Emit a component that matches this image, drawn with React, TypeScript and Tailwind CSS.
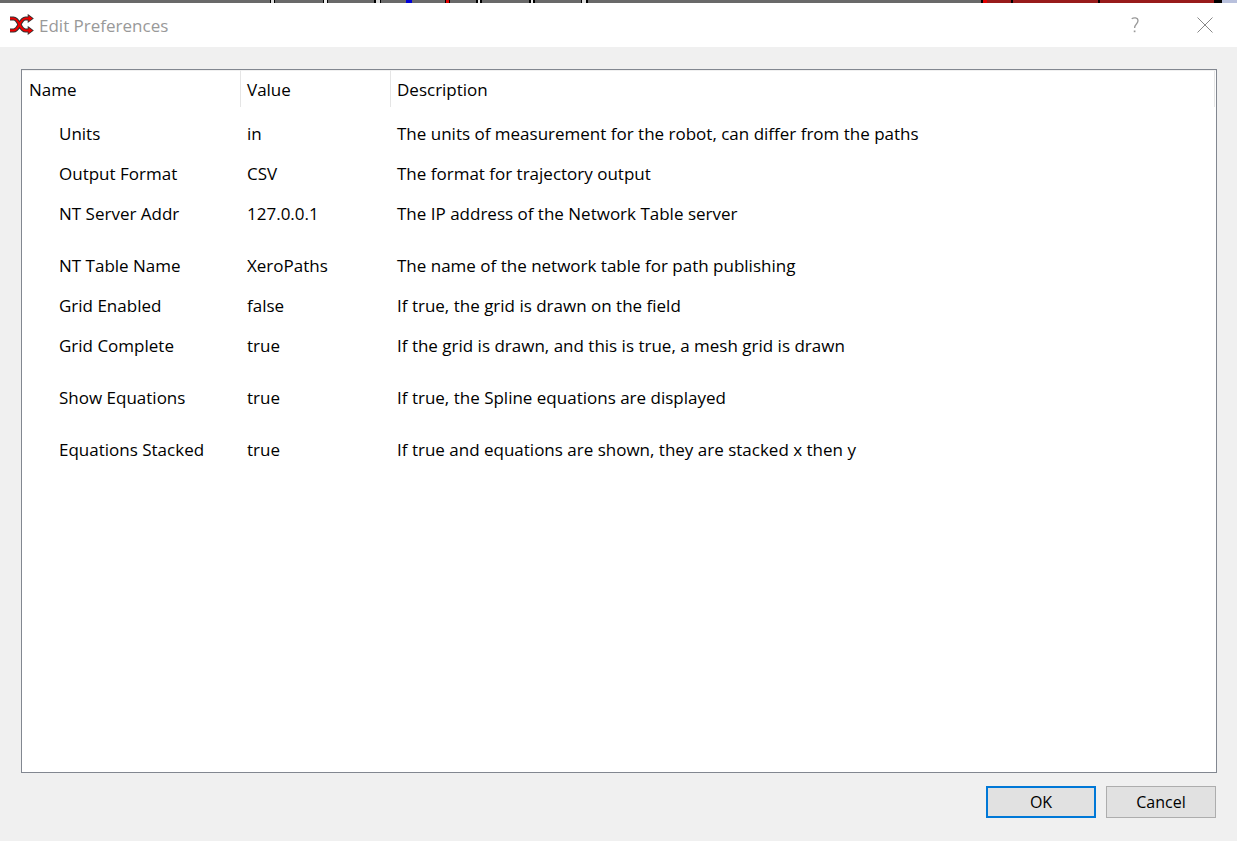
const preferences = [
  { name: 'Units', value: 'in', description: 'The units of measurement for the robot, can differ from the paths', pad: 'pt-[7px] h-[47px]' },
  { name: 'Output Format', value: 'CSV', description: 'The format for trajectory output', pad: 'h-10' },
  { name: 'NT Server Addr', value: '127.0.0.1', description: 'The IP address of the Network Table server', pad: 'h-10' },
  { name: 'NT Table Name', value: 'XeroPaths', description: 'The name of the network table for path publishing', pad: 'pt-3 h-[52px]' },
  { name: 'Grid Enabled', value: 'false', description: 'If true, the grid is drawn on the field', pad: 'h-10' },
  { name: 'Grid Complete', value: 'true', description: 'If the grid is drawn, and this is true, a mesh grid is drawn', pad: 'h-10' },
  { name: 'Show Equations', value: 'true', description: 'If true, the Spline equations are displayed', pad: 'pt-3 h-[52px]' },
  { name: 'Equations Stacked', value: 'true', description: 'If true and equations are shown, they are stacked x then y', pad: 'pt-3 h-[52px]' },
];

const fieldMarks: [number, number, string][] = [
  [270, 5, '#000'], [271, 3, '#ddd'],
  [323, 5, '#000'], [324, 3, '#eee'],
  [374, 7, '#000'], [376, 4, '#ddd'],
  [406, 6, '#0000d8'],
  [445, 5, '#000'], [446, 3, '#e00000'],
  [476, 6, '#000'], [478, 2, '#eee'],
  [529, 6, '#000'], [531, 2, '#eee'],
  [581, 7, '#000'], [582, 4, '#ddd'],
  [981, 233, '#981b1b'], [981, 2, '#000'], [983, 4, '#e00000'],
  [1011, 2, '#000'], [1098, 2, '#000'],
  [1214, 8, '#000'], [1222, 400, '#b8c0dc'],
];

function FieldEdge() {
  return (
    <svg className="block h-[3px] w-full shrink-0 bg-[#696969]" aria-hidden="true" shapeRendering="crispEdges">
      {fieldMarks.map(([x, width, fill], i) => (
        <rect key={i} x={x} y="0" width={width} height="3" fill={fill} />
      ))}
    </svg>
  );
}

function ShuffleIcon() {
  const lines = 'M1 5.5h3.5c6 0 6 12 12 12H20M1 17.5h3.5c6 0 6-12 12-12H20';
  const heads = 'M19.5 2.5L23.5 5.5l-4 3zM19.5 14.5L23.5 17.5l-4 3z';
  return (
    <svg className="h-6 w-[26px] shrink-0" viewBox="0 0 26 24" fill="none" aria-hidden="true">
      <path d={lines} stroke="#333333" strokeWidth="4" />
      <path d={heads} fill="#333333" stroke="#333333" strokeWidth="1.6" />
      <path d={lines} stroke="#f00000" strokeWidth="2" />
      <path d={heads} fill="#f00000" />
    </svg>
  );
}

export default function App() {
  return (
    <div className="flex min-h-screen flex-col bg-[#f0f0f0] font-['Open_Sans','Noto_Sans',sans-serif] text-[17px] leading-6 text-black">
      <FieldEdge />
      <header className="flex h-11 shrink-0 items-center bg-white pr-6 pl-[9px] text-[#999999]">
        <ShuffleIcon />
        <h1 className="ml-1 flex-1 pt-0.5 font-normal">Edit Preferences</h1>
        <button type="button" aria-label="Help" className="mr-[46px] flex size-8 items-center justify-center">
          <svg className="h-4 w-2" viewBox="0 0 8 16" fill="none" stroke="#999999" strokeWidth="1.3" aria-hidden="true">
            <path d="M.7 1.8C2.5.5 7 .1 7 3.8 7 7 3.6 7 3.6 11" />
            <path d="M3.6 13.5v1.7" strokeWidth="1.7" />
          </svg>
        </button>
        <button type="button" aria-label="Close" className="flex h-8 w-4 items-center justify-center">
          <svg className="size-4 shrink-0" viewBox="0 0 16 16" fill="none" stroke="#888888" aria-hidden="true">
            <path d="M.5.5l15 15M15.5.5l-15 15" />
          </svg>
        </button>
      </header>
      <main className="flex flex-1 flex-col px-5 pt-[22px] pb-[23px]">
        <div className="ml-px flex-1 border border-[#828790] bg-white">
          <table className="w-full table-fixed border-separate border-spacing-0 text-left">
            <colgroup>
              <col className="w-[219px]" />
              <col className="w-[150px]" />
              <col />
            </colgroup>
            <thead>
              <tr>
                <th className="h-[37px] border-t border-r border-t-[#f0f0f0] border-r-[#e5e5e5] p-0 pt-0.5 pl-[7px] font-normal">Name</th>
                <th className="border-t border-r border-t-[#f0f0f0] border-r-[#e5e5e5] p-0 pt-0.5 pl-[6px] font-normal">Value</th>
                <th className="border-t border-t-[#f0f0f0] p-0 pr-px font-normal">
                  <div className="flex h-9 items-center border-r border-[#e5e5e5] pt-0.5 pl-[6px]">Description</div>
                </th>
              </tr>
            </thead>
            <tbody>
              {preferences.map(({ name, value, description, pad }) => (
                <tr key={name}>
                  <td className={`pl-[37px] ${pad}`}>{name}</td>
                  <td className={`pl-[6px] ${pad}`}>{value}</td>
                  <td className={`pl-[6px] ${pad}`}>{description}</td>
                </tr>
              ))}
            </tbody>
          </table>
        </div>
        <div className="mt-[13px] mr-px flex justify-end gap-[10px] text-base">
          <button type="button" className="h-8 w-[110px] border-2 border-[#0078d7] bg-[#e1e1e1]">OK</button>
          <button type="button" className="h-8 w-[110px] border border-[#adadad] bg-[#e1e1e1]">Cancel</button>
        </div>
      </main>
    </div>
  );
}
